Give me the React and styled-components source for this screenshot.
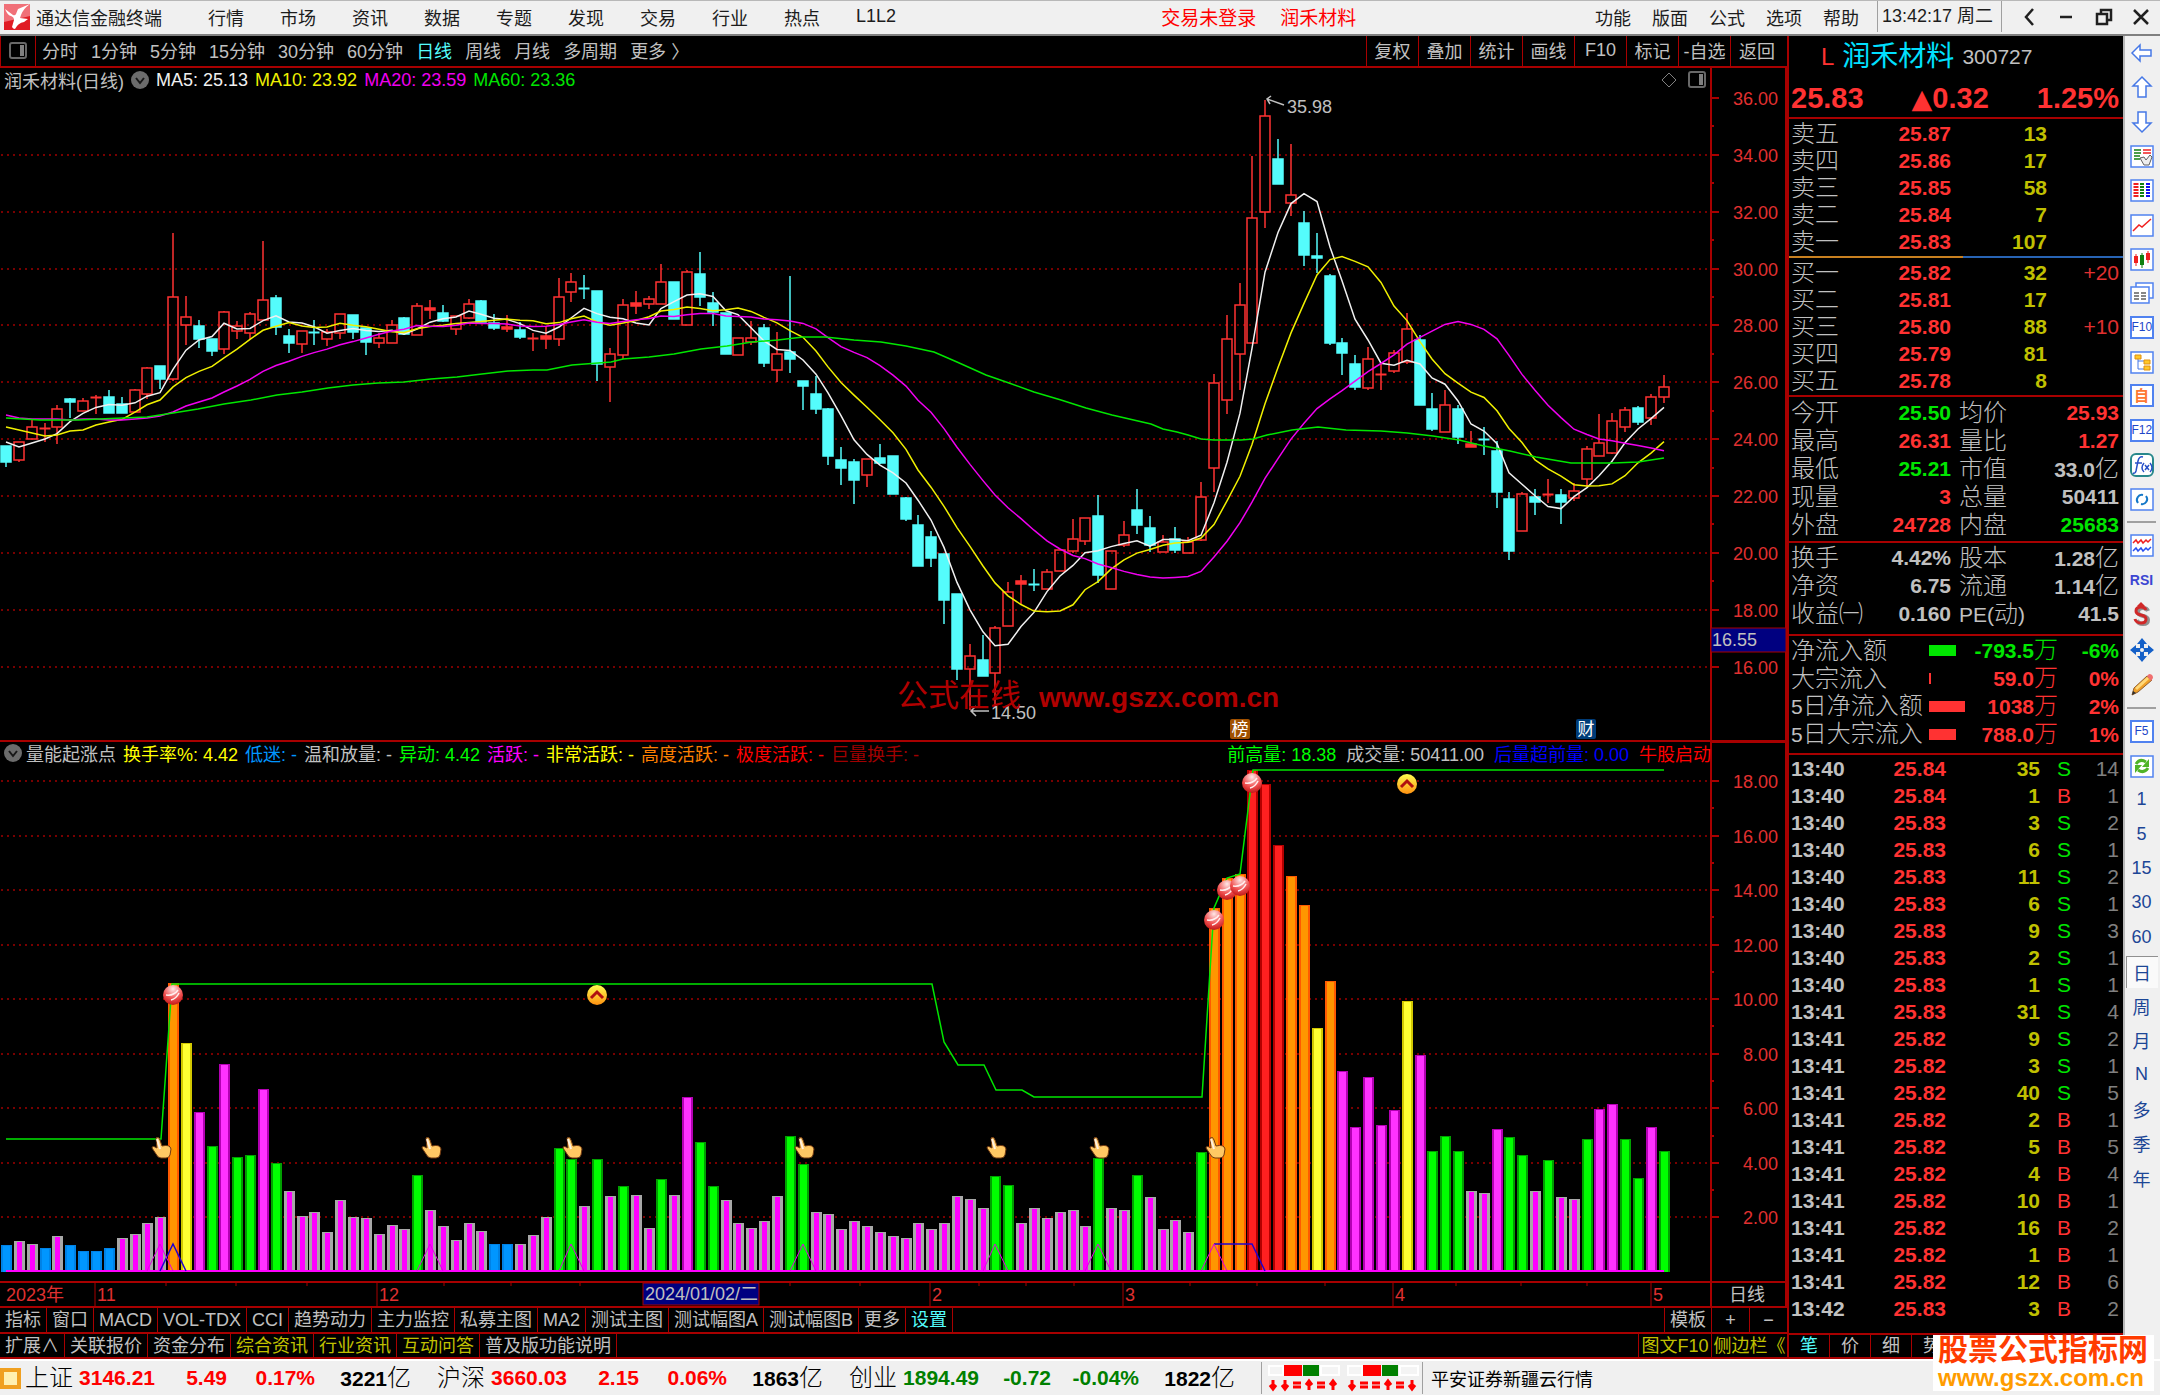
import React from 'react';
import styled, { createGlobalStyle, css } from 'styled-components';

const RED = '#ff3232';
const LINE = '#a80000';
const GREEN = '#00e600';
const YELLOW = '#c0c000';
const GREY = '#c0c0c0';
const CYAN = '#54fcfc';

const GlobalStyle = createGlobalStyle`
  * {
    box-sizing: border-box;
  }
  body {
    margin: 0;
    background: #1c2c3c;
    font-family: 'Liberation Sans', 'Noto Sans CJK SC', sans-serif;
    font-size: 18px;
    font-weight: 400;
  }
  button {
    margin: 0;
    padding: 0;
    border: 0;
    background: none;
    color: inherit;
    font: inherit;
    white-space: nowrap;
  }
  svg {
    display: block;
  }
`;

/* ---------- data ---------- */

// kind, high, body top, body bottom, low
// u: rising (hollow), d: falling, f: rising with a flat body
const CANDLES = [
  ['d', 446, 446, 462, 467], ['u', 442, 442, 460, 462], ['u', 420, 427, 439, 439], ['f', 423, 428, 429, 442],
  ['u', 405, 409, 427, 444], ['d', 398, 399, 402, 418], ['u', 398, 401, 411, 411], ['f', 395, 397, 398, 414],
  ['d', 390, 397, 413, 413], ['d', 397, 404, 413, 413], ['u', 389, 390, 412, 412], ['u', 367, 368, 394, 399],
  ['d', 366, 366, 379, 389], ['u', 233, 297, 379, 381], ['u', 296, 317, 325, 345], ['d', 320, 326, 339, 348],
  ['d', 339, 339, 351, 356], ['u', 311, 312, 349, 354], ['u', 321, 326, 331, 339], ['u', 312, 314, 333, 339],
  ['u', 241, 300, 320, 320], ['d', 295, 298, 327, 335], ['d', 329, 336, 343, 353], ['u', 331, 331, 344, 353],
  ['d', 320, 332, 333, 345], ['u', 329, 332, 339, 346], ['u', 314, 314, 333, 339], ['d', 315, 315, 332, 339],
  ['d', 328, 328, 342, 355], ['u', 333, 338, 343, 348], ['u', 320, 325, 343, 343], ['d', 317, 318, 334, 335],
  ['u', 303, 306, 335, 335], ['f', 300, 308, 310, 319], ['d', 305, 313, 321, 322], ['u', 316, 316, 329, 335],
  ['u', 299, 304, 318, 319], ['d', 300, 301, 322, 322], ['d', 314, 323, 328, 330], ['f', 315, 327, 329, 332],
  ['d', 322, 330, 337, 339], ['f', 333, 338, 339, 351], ['f', 326, 336, 339, 349], ['u', 278, 297, 339, 346],
  ['u', 273, 282, 292, 302], ['d', 275, 288, 289, 299], ['d', 291, 291, 364, 381], ['u', 348, 354, 367, 402],
  ['u', 299, 305, 355, 359], ['f', 291, 303, 306, 314], ['u', 296, 299, 304, 309], ['u', 264, 282, 304, 304],
  ['d', 282, 282, 319, 319], ['u', 270, 272, 325, 325], ['d', 252, 274, 297, 306], ['d', 292, 303, 312, 326],
  ['d', 313, 313, 354, 354], ['u', 338, 338, 355, 355], ['u', 321, 338, 342, 345], ['d', 324, 328, 363, 367],
  ['u', 332, 354, 370, 382], ['d', 276, 352, 359, 373], ['d', 381, 381, 386, 410], ['d', 376, 394, 409, 414],
  ['d', 408, 409, 456, 465], ['d', 447, 460, 468, 485], ['d', 459, 462, 480, 504], ['u', 459, 459, 475, 487],
  ['d', 444, 458, 463, 464], ['d', 456, 456, 494, 494], ['d', 497, 498, 519, 521], ['d', 515, 525, 566, 566],
  ['d', 531, 537, 558, 567], ['d', 554, 554, 600, 624], ['d', 594, 594, 669, 680], ['u', 644, 656, 669, 710],
  ['d', 635, 660, 676, 676], ['u', 626, 628, 673, 707], ['u', 582, 592, 626, 626], ['f', 575, 581, 584, 605],
  ['d', 569, 584, 585, 591], ['u', 569, 572, 589, 589], ['u', 550, 550, 571, 571], ['u', 519, 539, 551, 553],
  ['u', 518, 518, 541, 545], ['d', 495, 516, 575, 583], ['u', 551, 551, 589, 589], ['u', 521, 535, 545, 547],
  ['d', 489, 510, 525, 534], ['d', 516, 528, 545, 552], ['u', 535, 542, 552, 552], ['d', 527, 539, 550, 553],
  ['u', 537, 542, 553, 553], ['u', 482, 497, 540, 541], ['u', 374, 383, 468, 492], ['u', 315, 339, 400, 414],
  ['u', 283, 305, 354, 390], ['u', 156, 218, 343, 343], ['u', 100, 116, 212, 228], ['d', 139, 159, 184, 184],
  ['u', 144, 195, 203, 216], ['d', 211, 223, 255, 266], ['d', 233, 256, 258, 273], ['d', 274, 276, 343, 345],
  ['d', 338, 343, 353, 375], ['d', 355, 364, 387, 390], ['u', 347, 359, 388, 390], ['f', 362, 374, 375, 390],
  ['u', 350, 353, 371, 373], ['u', 313, 329, 362, 364], ['d', 335, 340, 405, 405], ['d', 393, 409, 429, 431],
  ['u', 390, 405, 432, 432], ['d', 405, 409, 437, 444], ['f', 431, 444, 447, 447], ['d', 427, 439, 440, 455],
  ['d', 441, 451, 492, 508], ['d', 492, 499, 551, 560], ['u', 492, 494, 531, 531], ['d', 489, 497, 502, 515],
  ['f', 479, 494, 495, 503], ['d', 489, 495, 502, 524], ['u', 483, 491, 498, 501], ['u', 446, 449, 479, 487],
  ['u', 414, 443, 456, 456], ['u', 413, 421, 453, 454], ['u', 407, 410, 427, 432], ['d', 406, 408, 422, 425],
  ['u', 394, 397, 418, 425], ['u', 375, 387, 397, 403],
];

const SEED5 = [442, 447, 443, 439];
const SEED10 = [427, 430, 433, 436, 435, 431, 430, 425, 422];
const SEED20 = [415, 418, 419, 419, 419, 420, 419, 419, 420, 420, 419, 418, 416, 412, 406, 402, 398, 392, 386];
const MA60 =
  '6,418 40,420 79,420 99,419 123,418 147,417 173,413 198,409 224,404 251,400 277,395 302,392 328,388 353,385 ' +
  '378,383 404,382 431,379 457,377 482,374 508,371 533,370 547,370 572,365 611,362 623,359 649,357 674,354 ' +
  '701,349 727,346 752,342 778,340 803,337 825,337 854,340 881,342 906,346 934,352 957,362 986,375 1009,383 ' +
  '1034,392 1061,400 1086,408 1112,415 1138,421 1151,424 1163,429 1177,432 1188,435 1201,439 1214,440 1241,440 ' +
  '1253,439 1267,435 1292,430 1318,427 1346,430 1381,431 1407,433 1433,436 1459,440 1484,446 1510,451 ' +
  '1536,457 1571,463 1613,463 1638,462 1664,458';

// colour key and top of each turnover bar
const BARS = (
  'b1245 w1241 w1244 b1248 w1236 b1245 b1251 b1251 b1248 w1238 w1234 w1223 w1217 o983 y1043 m1112 g1146 m1064 ' +
  'g1157 g1155 m1089 g1163 w1191 w1216 w1212 w1232 w1200 w1217 w1218 w1234 w1225 w1229 g1175 w1210 w1226 w1240 ' +
  'w1223 w1231 b1244 b1244 w1244 w1235 w1217 g1148 g1159 w1206 g1159 w1196 g1186 w1195 w1228 g1179 w1195 m1097 ' +
  'g1142 g1186 w1200 w1223 w1228 w1221 w1196 g1136 g1164 w1212 w1214 w1229 w1221 w1226 w1232 w1236 w1238 w1223 ' +
  'w1229 w1223 w1196 w1199 w1208 g1176 g1185 w1223 w1208 w1218 w1212 w1210 w1226 g1158 w1208 w1210 g1175 w1197 ' +
  'w1229 w1220 w1232 g1152 o908 o878 o874 r770 r784 r845 o876 o905 y1028 o981 m1071 m1127 m1077 m1125 m1110 ' +
  'y1001 m1055 g1151 g1136 g1151 w1191 w1193 m1129 g1137 g1155 w1191 g1160 w1197 w1199 g1139 m1109 m1104 g1139 ' +
  'g1178 m1127 g1151'
).split(' ');

const BAR_COLORS = {
  b: ['#0082e6', '#0096ff'],
  w: ['#a8a8a8', '#ff00ff'],
  m: ['#b400b4', '#ff32ff'],
  g: ['#00a000', '#00ff00'],
  y: ['#d2c800', '#ffff32'],
  o: ['#ff5a00', '#ff9600'],
  r: ['#b40000', '#ff2020'],
};

const px = (i) => Math.round(6 + i * 12.85);
const close = ([kind, , top, bottom]) => (kind === 'd' ? bottom : top);

const average = (seed) => {
  const n = seed.length + 1;
  return CANDLES.map((_, i) => {
    const y =
      i < seed.length
        ? seed[i]
        : CANDLES.slice(i - n + 1, i + 1).reduce((sum, c) => sum + close(c), 0) / n;
    return `${px(i)},${y.toFixed(1)}`;
  }).join(' ');
};

const MENU = ['行情', '市场', '资讯', '数据', '专题', '发现', '交易', '行业', '热点', 'L1L2'];
const MENU_RIGHT = ['功能', '版面', '公式', '选项', '帮助'];
const PERIODS = ['分时', '1分钟', '5分钟', '15分钟', '30分钟', '60分钟', '日线', '周线', '月线', '多周期', '更多 〉'];
const TOOLS = ['复权', '叠加', '统计', '画线', 'F10', '标记', '-自选', '返回'];

const INDICATORS = [
  '指标', '窗口', 'MACD', 'VOL-TDX', 'CCI', '趋势动力', '主力监控', '私募主图', 'MA2',
  '测试主图', '测试幅图A', '测试幅图B', '更多', '设置',
];
const LINKS = [
  ['扩展∧'], ['关联报价'], ['资金分布'], ['综合资讯', YELLOW], ['行业资讯', YELLOW], ['互动问答', YELLOW], ['普及版功能说明'],
];

const LEGEND = [
  ['换手率%: 4.42', '#ffff00'], ['低迷: -', '#0096ff'], ['温和放量: -', GREY], ['异动: 4.42', '#00ff00'],
  ['活跃: -', '#ff00ff'], ['非常活跃: -', '#ffff00'], ['高度活跃: -', '#ff8000'], ['极度活跃: -', '#ff0000'],
  ['巨量换手: -', '#a00000'],
];
const LEGEND_RIGHT = [
  ['前高量: 18.38', '#00ff00'], ['成交量: 50411.00', GREY], ['后量超前量: 0.00', '#0000ff'], ['牛股启动', '#ff0000'],
];

const ASKS = [['卖五', '25.87', 13], ['卖四', '25.86', 17], ['卖三', '25.85', 58], ['卖二', '25.84', 7], ['卖一', '25.83', 107]];
const BIDS = [['买一', '25.82', 32, '+20'], ['买二', '25.81', 17], ['买三', '25.80', 88, '+10'], ['买四', '25.79', 81], ['买五', '25.78', 8]];

const STATS = [
  ['今开', '25.50', GREEN, '均价', '25.93', RED],
  ['最高', '26.31', RED, '量比', '1.27', RED],
  ['最低', '25.21', GREEN, '市值', '33.0亿', GREY],
  ['现量', '3', RED, '总量', '50411', GREY],
  ['外盘', '24728', RED, '内盘', '25683', GREEN],
];
const BASICS = [
  ['换手', '4.42%', GREY, '股本', '1.28亿', GREY],
  ['净资', '6.75', GREY, '流通', '1.14亿', GREY],
  ['收益㈠', '0.160', GREY, 'PE(动)', '41.5', GREY],
];
const FLOWS = [
  ['净流入额', 27, '-793.5万', '-6%', GREEN],
  ['大宗流入', 2, '59.0万', '0%', RED],
  ['5日净流入额', 36, '1038万', '2%', RED],
  ['5日大宗流入', 27, '788.0万', '1%', RED],
];

const TICKS = [
  ['13:40', '25.84', 35, 'S', 14], ['13:40', '25.84', 1, 'B', 1], ['13:40', '25.83', 3, 'S', 2],
  ['13:40', '25.83', 6, 'S', 1], ['13:40', '25.83', 11, 'S', 2], ['13:40', '25.83', 6, 'S', 1],
  ['13:40', '25.83', 9, 'S', 3], ['13:40', '25.83', 2, 'S', 1], ['13:40', '25.83', 1, 'S', 1],
  ['13:41', '25.83', 31, 'S', 4], ['13:41', '25.82', 9, 'S', 2], ['13:41', '25.82', 3, 'S', 1],
  ['13:41', '25.82', 40, 'S', 5], ['13:41', '25.82', 2, 'B', 1], ['13:41', '25.82', 5, 'B', 5],
  ['13:41', '25.82', 4, 'B', 4], ['13:41', '25.82', 10, 'B', 1], ['13:41', '25.82', 16, 'B', 2],
  ['13:41', '25.82', 1, 'B', 1], ['13:41', '25.82', 12, 'B', 6], ['13:42', '25.83', 3, 'B', 2],
];

const INDEXES = [
  ['上证', '3146.21', '5.49', '0.17%', '3221', '#ff0000'],
  ['沪深', '3660.03', '2.15', '0.06%', '1863', '#ff0000'],
  ['创业', '1894.49', '-0.72', '-0.04%', '1822', '#008000'],
];

/* ---------- title bar ---------- */

const TitleBar = styled.header`
  display: flex;
  align-items: center;
  height: 36px;
  padding: 0 0 2px 4px;
  border-top: 1px solid #b8b8b8;
  border-bottom: 2px solid #808080;
  background: #f0f0f0;
  color: #1c1c1c;
`;

const AppName = styled.span`
  margin: 0 46px 0 6px;
  white-space: nowrap;
`;

const Menu = styled.nav`
  display: flex;
  gap: ${({ $gap }) => $gap}px;
`;

const Spacer = styled.div`
  flex: ${({ $grow }) => $grow} 1 0;
`;

const Notice = styled.div`
  display: flex;
  gap: 24px;
  color: #ff0000;
  font-size: 19px;
`;

const Clock = styled.time`
  width: 125px;
  margin-left: 18px;
  padding-left: 4px;
  border: solid #a0a0a0;
  border-width: 0 1px;
  line-height: 31px;
  white-space: nowrap;
`;

const WindowButtons = styled.div`
  display: flex;
  justify-content: space-between;
  width: 158px;
  padding: 0 10px 0 18px;
`;

const Logo = () => (
  <svg width="26" height="26" viewBox="0 0 26 26">
    <rect width="26" height="26" fill="#e01c24" />
    <path d="M0 0h26v12L0 18z" fill="#f07078" />
    <path d="M1 5l8 6q2 1 3-1l2-5 12-5q-7 5-9 11l-1 3 8 1-4 3q-6 1-9 7-2 0-3-2l2-7q0-3-3-4-3 0-6-7z" fill="#fff" />
  </svg>
);

const WindowIcon = ({ d }) => (
  <svg width="18" height="18" viewBox="0 0 18 18" fill="none" stroke="#202020" strokeWidth="2.5">
    <path d={d} />
  </svg>
);

/* ---------- frame ---------- */

const Main = styled.main`
  display: flex;
  align-items: stretch;
  background: #000;
  color: ${GREY};
`;

const ChartArea = styled.section`
  flex: 1;
  min-width: 0;
`;

const ToolRow = styled.div`
  display: flex;
  height: 32px;
  border-bottom: 2px solid ${LINE};
`;

const LayoutButton = styled.button`
  display: grid;
  place-items: center;
  width: 36px;
  border: solid ${LINE};
  border-width: 0 1px;
`;

const Periods = styled.div`
  display: flex;
  flex: 1;
  gap: 13px;
  padding: 0 0 2px 6px;
`;

const PeriodButton = styled.button`
  color: ${({ $active }) => ($active ? CYAN : GREY)};
`;

const ToolButton = styled.button`
  width: 52px;
  padding-bottom: 2px;
  border-left: 1px solid ${LINE};

  &:last-child {
    width: 57px;
    padding-right: 4px;
  }
`;

const PanelIcon = () => (
  <svg width="18" height="18" viewBox="0 0 18 18">
    <rect x="1" y="1" width="16" height="15" rx="2" fill="none" stroke="#686868" strokeWidth="2" />
    <rect x="11" y="3" width="4" height="11" fill="#808080" />
  </svg>
);

/* ---------- charts ---------- */

const ChartBox = styled.div`
  display: grid;
  overflow: hidden;

  > * {
    grid-area: 1 / 1;
    min-width: 0;
  }
  > svg {
    width: 100%;
    height: auto;
  }
`;

const Legend = styled.div`
  z-index: 1;
  display: flex;
  align-self: start;
  align-items: center;
  gap: 7px;
  height: ${({ $height }) => $height}px;
  margin-right: 76px;
  padding-left: 4px;
  overflow: hidden;
  white-space: nowrap;
`;

const LegendItem = styled.span`
  color: ${({ $color }) => $color || GREY};
`;

const LegendTitle = styled.span`
  display: flex;
  align-items: center;
  gap: 4px;
`;

const LegendEnd = styled.div`
  display: flex;
  align-items: center;
  gap: 10px;
  margin-left: auto;
  padding-right: ${({ $pad }) => $pad || 0}px;
`;

const DropIcon = () => (
  <svg width="18" height="18" viewBox="0 0 18 18">
    <circle cx="9" cy="9" r="9" fill="#6c6c6c" />
    <path d="M5 7l4 5 4-5" fill="none" stroke="#181818" strokeWidth="2" />
  </svg>
);

const Dots = ({ y }) => <line x1="1" x2="1711" y1={y} y2={y} stroke="#a00000" strokeWidth="1.5" strokeDasharray="2 4" />;

const AxisLabel = ({ y, children }) => (
  <text x="1778" y={y + 7} textAnchor="end" fontSize="18" fill="#e03030">
    {children}
  </text>
);

const Tick = ({ y, long }) => <line x1="1711" x2={long ? 1719 : 1714} y1={y} y2={y} stroke={LINE} strokeWidth="2" />;

const Candle = ({ i, data: [kind, high, top, bottom, low] }) => {
  const x = px(i);
  const color = kind === 'd' ? CYAN : RED;
  return (
    <g stroke={color} strokeWidth="1.5">
      {high < top && <line x1={x} x2={x} y1={high} y2={top} />}
      {low > bottom && <line x1={x} x2={x} y1={bottom} y2={low} />}
      <rect
        x={x - 5}
        y={top}
        width="10"
        height={bottom - top}
        fill={kind === 'u' ? 'none' : color}
        strokeWidth={bottom - top < 2 ? 1 : 1.5}
      />
    </g>
  );
};

const Badge = ({ x, fill, children }) => (
  <g>
    <rect x={x} y="719" width="20" height="20" rx="2" fill={fill} />
    <text x={x + 10} y="735" textAnchor="middle" fontSize="17" fill="#fff">
      {children}
    </text>
  </g>
);

const priceY = (p) => Math.round(98 + (36 - p) * 28.43);
const volumeY = (v) => Math.round(1272 - v * 27.28);

const PriceChart = () => (
  <svg viewBox="0 68 1787 674">
    {[34, 32, 30, 28, 26, 24, 22, 20, 18, 16].map((p) => (
      <Dots key={p} y={priceY(p)} />
    ))}
    {CANDLES.map((c, i) => (
      <Candle key={i} i={i} data={c} />
    ))}
    <g fill="none" strokeWidth="1.5">
      <polyline points={average(SEED5)} stroke="#f0f0f0" />
      <polyline points={average(SEED10)} stroke="#f0f000" />
      <polyline points={average(SEED20)} stroke="#f000f0" />
      <polyline points={MA60} stroke="#00e600" />
    </g>
    <g stroke={GREY} strokeWidth="1.5" fill="none">
      <path d="M1284 105l-17-6m4-3l-4 3 3 5" />
      <path d="M989 711h-18m5-5l-5 5 5 5" />
    </g>
    <text x="1287" y="113" fontSize="18" fill={GREY}>35.98</text>
    <text x="991" y="719" fontSize="18" fill={GREY}>14.50</text>
    <text x="897" y="706" fontSize="31" fill="#b00000">公式在线</text>
    <text x="1039" y="707" fontSize="28" fontWeight="700" fill="#b00000">www.gszx.com.cn</text>
    <Badge x={1230} fill="#a05000">榜</Badge>
    <Badge x={1576} fill="#003c78">财</Badge>
    <path d="M1711 68v672M0 741h1787M1786 68v672" stroke={LINE} strokeWidth="2" />
    {Array.from({ length: 21 }, (_, k) => 36 - k).map((p) => (
      <Tick key={p} y={priceY(p)} long={p % 2 === 0} />
    ))}
    {[36, 34, 32, 30, 28, 26, 24, 22, 20, 18, 16].map((p) => (
      <AxisLabel key={p} y={priceY(p)}>{`${p}.00`}</AxisLabel>
    ))}
    <rect x="1711" y="628" width="75" height="24" fill="#000080" stroke={LINE} />
    <text x="1712" y="646" fontSize="18" fill={GREY}>16.55</text>
  </svg>
);

const Ball = ({ i, y }) => (
  <g>
    <circle cx={px(i)} cy={y} r="10" fill="url(#ball)" />
    <path d={`M${px(i) - 7} ${y}q8 1 12-5M${px(i) - 2} ${y + 5}q5-1 8-7`} stroke="#fff0f0" strokeWidth="1.5" fill="none" />
  </g>
);

const UpMark = ({ i, y }) => (
  <g>
    <circle cx={px(i)} cy={y} r="10" fill="url(#gold)" />
    <path d={`M${px(i) - 6} ${y + 3}l6-6 6 6`} stroke="#b01010" strokeWidth="3" fill="none" />
  </g>
);

const Hand = ({ i }) => (
  <g transform={`translate(${px(i) - 8} 1137)`}>
    <path
      d="M4 1q3-2 4 2l2 6q8-2 9 3l-1 6q-1 3-4 3h-5q-3 0-5-4l-4-6q0-3 5 0z"
      fill="#ffc864"
      stroke="#703810"
    />
    <path d="M5 2l3 10" stroke="#fff0e0" strokeWidth="2" />
  </g>
);

const Bar = ({ i, data }) => {
  const [edge, core] = BAR_COLORS[data[0]];
  const top = Number(data.slice(1));
  const inset = data[0] === 'w' ? 3 : 2;
  return (
    <g>
      <rect x={px(i) - 5} y={top} width="11" height={1272 - top} fill={edge} />
      <rect x={px(i) - 5 + inset} y={top + 1} width={11 - inset * 2} height={1271 - top} fill={core} />
    </g>
  );
};

const spike = (i) => `M${px(i - 1)} 1271L${px(i)} 1244L${px(i + 1)} 1271`;

const MONTHS = [[95, '11'], [377, '12'], [930, '2'], [1123, '3'], [1393, '4'], [1651, '5']];
const WEEKS = [166, 236, 307, 444, 511, 580, 790, 860, 979, 1026, 1074, 1190, 1257, 1325, 1456, 1521, 1587];

const TurnoverChart = () => (
  <svg viewBox="0 742 1787 564">
    <defs>
      <radialGradient id="ball" cx="0.5" cy="0.2" r="0.8">
        <stop offset="0" stopColor="#ffe8e8" />
        <stop offset="0.6" stopColor="#f05050" />
        <stop offset="1" stopColor="#c01818" />
      </radialGradient>
      <linearGradient id="gold" x2="0" y2="1">
        <stop offset="0" stopColor="#ffff50" />
        <stop offset="1" stopColor="#ff9010" />
      </linearGradient>
    </defs>
    {[18, 16, 14, 12, 10, 8, 6, 4, 2].map((v) => (
      <Dots key={v} y={volumeY(v)} />
    ))}
    {BARS.map((b, i) => (
      <Bar key={i} i={i} data={b} />
    ))}
    <path d="M6 1271H1664" stroke="#ff00ff" strokeWidth="2" />
    <path d={spike(13) + `M${px(94)} 1244H${px(97)}L${px(98)} 1271`} stroke="#2000d0" strokeWidth="1.5" fill="none" />
    <path d={[12, 33, 44, 62, 77, 85, 94].map(spike).join('')} stroke="#e000e0" strokeWidth="1" fill="none" />
    <polyline
      points="6,1139 161,1139 172,984 932,984 944,1042 958,1065 984,1065 996,1090 1022,1090 1034,1097 1202,1097 1214,908 1227,878 1240,874 1253,770 1664,770"
      fill="none"
      stroke="#00e600"
      strokeWidth="1.5"
    />
    <Ball i={13} y={995} />
    <Ball i={94} y={920} />
    <Ball i={95} y={890} />
    <Ball i={96} y={886} />
    <Ball i={97} y={783} />
    <UpMark i={46} y={995} />
    <UpMark i={109} y={784} />
    {[12, 33, 44, 62, 77, 85, 94].map((i) => (
      <Hand key={i} i={i} />
    ))}
    <path d="M1711 742h75v540h-75zM0 1282h1787M1711 1282v24M1786 1282v24" fill="none" stroke={LINE} strokeWidth="2" />
    {Array.from({ length: 17 }, (_, k) => k + 2).map((v) => (
      <Tick key={v} y={volumeY(v)} long={v % 2 === 0} />
    ))}
    {[18, 16, 14, 12, 10, 8, 6, 4, 2].map((v) => (
      <AxisLabel key={v} y={volumeY(v)}>{`${v}.00`}</AxisLabel>
    ))}
    <text x="6" y="1301" fontSize="18" fill="#e03030">2023年</text>
    {MONTHS.map(([x, label]) => (
      <g key={x}>
        <line x1={x} x2={x} y1="1283" y2="1306" stroke={LINE} />
        <text x={x + 2} y="1301" fontSize="18" fill="#e03030">{label}</text>
      </g>
    ))}
    {WEEKS.map((x) => (
      <line key={x} x1={x} x2={x} y1="1283" y2="1286" stroke={LINE} />
    ))}
    <rect x="643" y="1283" width="116" height="22" fill="#000080" stroke={LINE} />
    <text x="645" y="1300" fontSize="18" fill={GREY}>2024/01/02/二</text>
    <text x="1729" y="1301" fontSize="18" fill={GREY}>日线</text>
  </svg>
);

/* ---------- tab rows ---------- */

const TabRow = styled.div`
  display: flex;
  height: ${({ $height }) => $height}px;
  border-top: 2px solid ${LINE};
  ${({ $last }) => $last && css`border-bottom: 2px solid ${LINE};`}
`;

const Tab = styled.button`
  padding: 0 5px;
  border-right: 1px solid ${LINE};
  color: ${({ $color }) => $color || GREY};
  line-height: 22px;
`;

const EndTab = styled(Tab)`
  width: ${({ $width }) => $width}px;
  padding: 0;
  border-right: 0;
  border-left: 1px solid ${LINE};
`;

/* ---------- quote panel ---------- */

const Panel = styled.aside`
  display: flex;
  flex-direction: column;
  flex: none;
  width: 336px;
  border-left: 2px solid ${LINE};
  font-size: 21px;
`;

const PanelBlock = styled.div`
  padding: ${({ $pad }) => $pad};
  border-bottom: 2px solid ${LINE};
`;

const PanelRows = styled.div`
  padding: 1px 4px 1px 2px;
`;

const StockName = styled.h1`
  display: flex;
  align-items: center;
  gap: 8px;
  height: 42px;
  margin: 0;
  padding: 0 0 2px 30px;
  color: ${GREY};
  font-size: 21px;
  font-weight: 400;
`;

const NameText = styled.span`
  color: #00e0ff;
  font-size: 28px;
  line-height: 36px;
`;

const Flag = styled.span`
  color: ${RED};
  font-size: 24px;
`;

const PriceLine = styled.div`
  display: flex;
  justify-content: space-between;
  color: ${RED};
  font-size: 29px;
  font-weight: 700;
  line-height: 38px;
`;

const RiseMark = styled.span`
  font-family: 'DejaVu Sans', sans-serif;
  font-size: 27px;
  line-height: 30px;
`;

const Cell = styled.span`
  color: ${({ $color }) => $color || GREY};
  font-weight: ${({ $plain }) => ($plain ? 400 : 700)};
  text-align: right;
  white-space: nowrap;
`;

const Label = styled.span`
  font-size: 24px;
  font-weight: 300;
  white-space: nowrap;

  b {
    font-size: 21px;
  }
`;

const Unit = styled.span`
  font-size: 24px;
  font-weight: 300;
`;

const OrderRow = styled.div`
  display: grid;
  grid-template-columns: 60px 100px 96px 1fr;
  height: 27px;
  line-height: 27px;
`;

const Divider = styled.div`
  height: 2px;
  background: linear-gradient(90deg, #c88020 52%, #2864b4 52%);
`;

const StatRow = styled.div`
  display: grid;
  grid-template-columns: 80px 80px 80px 1fr;
  height: 28px;
  line-height: 28px;

  > :nth-child(3) {
    padding-left: 8px;
  }
`;

const FlowRow = styled.div`
  display: grid;
  grid-template-columns: 138px 40px 89px 1fr;
  align-items: center;
  height: 28px;
  line-height: 28px;
`;

const FlowBar = styled.div`
  height: 11px;
  background: ${({ $color }) => $color};
`;

const TickTable = styled.table`
  width: 100%;
  border-collapse: collapse;
  table-layout: fixed;
  font-weight: 700;
  line-height: 27px;

  td {
    height: 27px;
    padding: 0;
    text-align: right;
  }
  td:first-child {
    width: 60px;
    padding-left: 2px;
    text-align: left;
  }
  td:nth-child(2) {
    width: 97px;
    color: ${RED};
  }
  td:nth-child(3) {
    width: 94px;
    color: ${YELLOW};
  }
  td:nth-child(4) {
    width: 31px;
    font-weight: 400;
  }
  td:nth-child(5) {
    padding-right: 4px;
    color: #808080;
    font-weight: 400;
  }
`;

const Side = styled.td`
  color: ${({ $side }) => ($side === 'S' ? GREEN : RED)};
`;

const PanelTabs = styled.div`
  display: flex;
  height: 26px;
  margin-top: auto;
  border-top: 2px solid ${LINE};
  border-bottom: 2px solid ${LINE};
  font-size: 18px;
`;

const PanelTab = styled(Tab)`
  width: 41px;
`;

// numbers are bold, the Chinese unit after them is light
const Amount = ({ children }) => {
  const unit = /[亿万]$/.test(children) ? children.slice(-1) : '';
  return (
    <>
      {unit ? children.slice(0, -1) : children}
      {unit && <Unit>{unit}</Unit>}
    </>
  );
};

// latin parts of a label use the smaller bold face
const LabelText = ({ children }) => (
  <Label>
    {children.split(/([A-Z0-9()]+)/).map((part, i) => (i % 2 ? <b key={i}>{part}</b> : part))}
  </Label>
);

const Orders = ({ rows }) =>
  rows.map(([label, price, count, change]) => (
    <OrderRow key={label}>
      <Label>{label}</Label>
      <Cell $color={RED}>{price}</Cell>
      <Cell $color={YELLOW}>{count}</Cell>
      {change && <Cell $plain $color="#e03030">{change}</Cell>}
    </OrderRow>
  ));

const Stats = ({ rows }) =>
  rows.map(([l1, v1, c1, l2, v2, c2]) => (
    <StatRow key={l1}>
      <LabelText>{l1}</LabelText>
      <Cell $color={c1}>{v1}</Cell>
      <LabelText>{l2}</LabelText>
      <Cell $color={c2}><Amount>{v2}</Amount></Cell>
    </StatRow>
  ));

const QuotePanel = () => (
  <Panel>
    <PanelBlock $pad="1px 4px 0 2px">
      <StockName>
        <Flag>L</Flag>
        <NameText>润禾材料</NameText>
        300727
      </StockName>
      <PriceLine>
        <span>25.83</span>
        <span><RiseMark>▲</RiseMark>0.32</span>
        <span>1.25%</span>
      </PriceLine>
    </PanelBlock>
    <PanelBlock $pad="0">
      <PanelRows>
        <Orders rows={ASKS} />
      </PanelRows>
      <Divider />
      <PanelRows>
        <Orders rows={BIDS} />
      </PanelRows>
    </PanelBlock>
    <PanelBlock $pad="2px 4px 2px 2px">
      <Stats rows={STATS} />
    </PanelBlock>
    <PanelBlock $pad="1px 4px 6px 2px">
      <Stats rows={BASICS} />
    </PanelBlock>
    <PanelBlock $pad="0 4px 5px 2px">
      {FLOWS.map(([label, width, amount, pct, color]) => (
        <FlowRow key={label}>
          <LabelText>{label}</LabelText>
          <FlowBar $color={color} style={{ width }} />
          <Cell $color={color}><Amount>{amount}</Amount></Cell>
          <Cell $color={color}>{pct}</Cell>
        </FlowRow>
      ))}
    </PanelBlock>
    <TickTable>
      <tbody>
        {TICKS.map(([time, price, count, side, deals], i) => (
          <tr key={i}>
            <td>{time}</td>
            <td>{price}</td>
            <td>{count}</td>
            <Side $side={side}>{side}</Side>
            <td>{deals}</td>
          </tr>
        ))}
      </tbody>
    </TickTable>
    <PanelTabs>
      {['笔', '价', '细', '势'].map((t) => (
        <PanelTab key={t} type="button" $color={t === '笔' ? CYAN : GREY}>{t}</PanelTab>
      ))}
    </PanelTabs>
  </Panel>
);

/* ---------- side toolbar ---------- */

const SideBar = styled.div`
  flex: none;
  width: 37px;
  padding-right: 2px;
  border-left: 2px solid #b8b8b8;
  background: #f0f0f0;
  color: #1c4696;
`;

const SideGroup = styled.div`
  display: flex;
  flex-direction: column;
  justify-content: space-around;
  align-items: center;
  height: ${({ $height }) => $height}px;
`;

const SideButton = styled.button`
  display: grid;
  place-items: center;
  width: 32px;
  height: 32px;
  ${({ $active }) =>
    $active &&
    css`
      border: solid #909090;
      border-width: 1px 0 0 1px;
      background: #fafafa;
    `}
`;

const Rule = styled.div`
  height: 2px;
  margin: 5px 2px;
  background: #a0a0a0;
`;

const KeyBox = styled.span`
  width: 24px;
  border: 2px solid #5082f0;
  background: #fff;
  color: ${({ $color }) => $color || '#1e46c8'};
  font-size: ${({ $size }) => $size || 12}px;
  font-weight: ${({ $size }) => ($size ? 700 : 400)};
  line-height: 19px;
  text-align: center;
`;

const Rsi = styled.b`
  color: #3c46d2;
  font-size: 14px;
`;

const Frame = ({ children }) => (
  <svg width="24" height="24" viewBox="0 0 24 24" fill="none">
    <rect x="1" y="2" width="22" height="21" fill="#fff" stroke="#5082f0" strokeWidth="1.5" />
    {children}
  </svg>
);

const Arrow = ({ d }) => (
  <svg width="24" height="24" viewBox="0 0 24 24">
    <path d={d} fill="#fff" stroke="#4678e6" strokeWidth="1.5" />
  </svg>
);

const SIDE_TOP = [
  <Arrow d="M2 12l8-8v5h11v6H10v5z" />,
  <Arrow d="M12 2l9 9h-5v11H8V11H3z" />,
  <Arrow d="M12 22l9-9h-5V2H8v11H3z" />,
  <Frame>
    <path d="M4 6h7M4 9h7M4 12h6M4 15h6" stroke="#108010" strokeWidth="1.5" />
    <path d="M13 6h8M13 9h8" stroke="#f02020" strokeWidth="1.5" />
    <path d="M10 14l4 7h5l3-8-2-2-4 5-2-3z" fill="#eee" stroke="#606060" />
  </Frame>,
  <Frame>
    <path d="M6 5v15" stroke="#f02020" strokeWidth="5" strokeDasharray="2 1" />
    <path d="M12 5v15" stroke="#108010" strokeWidth="4" strokeDasharray="2 1" />
    <path d="M18 5v15" stroke="#1010f0" strokeWidth="4" strokeDasharray="2 1" />
  </Frame>,
  <Frame>
    <path d="M3 18l6-6 3 2 9-8" stroke="#f02020" strokeWidth="1.5" />
  </Frame>,
  <Frame>
    <path d="M6 7v12M18 4v12" stroke="#f02020" />
    <path d="M6 9v7M18 6v7" stroke="#f02020" strokeWidth="4" />
    <path d="M12 6v15" stroke="#108010" />
    <path d="M12 8v10" stroke="#108010" strokeWidth="4" />
  </Frame>,
  <svg width="24" height="24" viewBox="0 0 24 24" fill="#fff" stroke="#5082f0" strokeWidth="1.5">
    <rect x="6" y="2" width="17" height="15" />
    <rect x="1" y="6" width="18" height="16" />
    <path d="M4 12h5M4 15h5M4 18h5M11 12h5M11 15h5M11 18h5" stroke="#606060" />
  </svg>,
  <KeyBox>F10</KeyBox>,
  <Frame>
    <path d="M8 8v11h7M8 11h6" stroke="#4678e6" />
    <path d="M5 5h6v4H5zM14 10h6v4h-6zM14 16h6v4h-6z" fill="#ffc828" stroke="#e09010" />
  </Frame>,
  <KeyBox $color="#ff7832" $size={15}>自</KeyBox>,
  <KeyBox>F12</KeyBox>,
  <svg width="24" height="24" viewBox="0 0 24 24" fill="none">
    <rect x="1" y="1" width="22" height="22" rx="5" fill="#fff" stroke="#28888c" strokeWidth="2" />
    <path d="M13 4q-4-1-5 4L6 18q-1 3-3 2M5 10h7M14 10q-4 5 0 9M20 10q4 5 0 9M15 12l4 5M19 12l-4 5" stroke="#2850c8" strokeWidth="1.5" />
  </svg>,
  <Frame>
    <path d="M8 16a5 5 0 0 1 5-8M16 9a5 5 0 0 1-5 8" stroke="#1478c8" strokeWidth="2" />
  </Frame>,
];

const SIDE_MIDDLE = [
  <Frame>
    <path d="M3 10l3-3 2 3 3-3 2 3 3-3 2 2 3-3" stroke="#f02020" strokeWidth="1.5" />
    <path d="M3 18l3-3 2 3 3-3 2 3 3-3 2 2 3-3" stroke="#2850f0" strokeWidth="1.5" />
  </Frame>,
  <Rsi>RSI</Rsi>,
  <svg width="24" height="26" viewBox="0 0 24 26" fill="none">
    <path d="M18 9q-1-3-5-3-5 0-5 4 0 3 5 4t5 4q0 4-5 4-5 0-6-4" stroke="#909090" strokeWidth="4" />
    <path d="M16 8q-1-3-5-3-5 0-5 4 0 3 5 4t5 4q0 4-5 4-5 0-6-4" stroke="#d02828" strokeWidth="3" />
    <path d="M7 4l4-4 4 4z" fill="#d02828" />
  </svg>,
  <svg width="24" height="24" viewBox="0 0 24 24" fill="#1460c8">
    <path d="M12 0l5 6H7zM12 24l5-6H7zM0 12l6-5v10zM24 12l-6-5v10z" />
    <path d="M12 5v14M5 12h14" stroke="#1460c8" strokeWidth="4" />
    <circle cx="12" cy="12" r="2" fill="#f0f0f0" />
  </svg>,
  <svg width="24" height="24" viewBox="0 0 24 24">
    <path d="M2 22l2-7L17 3l5 4L8 19z" fill="#f0a028" stroke="#906030" />
    <path d="M5 15L17 4l2 2L7 17z" fill="#ffd878" />
    <path d="M17 3l2-2q4 0 4 4l-2 3z" fill="#f07070" />
    <path d="M2 22l1-4 3 2z" fill="#303030" />
  </svg>,
];

const SIDE_BOTTOM = [
  <KeyBox>F5</KeyBox>,
  <Frame>
    <path d="M6 10q4-6 10-2M18 14q-4 6-10 2" stroke="#50b428" strokeWidth="3" />
    <path d="M19 5v8h-7zM5 19v-8h7z" fill="#50b428" />
  </Frame>,
  '1', '5', '15', '30', '60', '日', '周', '月', 'N', '多', '季', '年',
];

const SideButtons = ({ items, height }) => (
  <SideGroup $height={height}>
    {items.map((item, i) => (
      <SideButton key={i} type="button" $active={item === '日'}>{item}</SideButton>
    ))}
  </SideGroup>
);

/* ---------- status bar ---------- */

const StatusBar = styled.footer`
  display: flex;
  align-items: center;
  height: 36px;
  border-top: 2px solid #fff;
  background: #f0f0f0;
  color: #000;
`;

const StatusIcon = styled.div`
  width: 21px;
  height: 21px;
  margin-right: 4px;
  border: 4px solid #f0a020;
  background: #fff0b0;
`;

const IndexQuote = styled.div`
  display: grid;
  grid-template-columns: 54px 76px 72px 88px 96px;
  align-items: center;
  margin-right: 26px;
  font-size: 21px;
  line-height: 30px;
`;

const Breadth = styled.div`
  display: flex;
  align-items: center;
  gap: 6px;
  height: 32px;
  padding: 0 2px 0 6px;
  border: solid #a0a0a0;
  border-width: 0 1px;
`;

const Server = styled.span`
  padding-left: 8px;
  white-space: nowrap;
`;

const SIGNS = {
  d: 'M4 0v9M1 5l3 4 3-4',
  u: 'M4 10V1M1 5l3-4 3 4',
  e: 'M0 3h8M0 7h8',
};

const BreadthIcon = ({ signs }) => (
  <svg width="73" height="30" viewBox="0 0 73 30" fill="none">
    <path d="M1 3h14v9H1zM53 3h18v9H53z" fill="#f4f4f4" stroke="#fff" strokeWidth="2" />
    <path d="M16 2h18v11H16z" fill="#ff0000" />
    <path d="M35 2h16v11H35z" fill="#008000" />
    {signs.split('').map((s, i) => (
      <path key={i} d={SIGNS[s]} transform={`translate(${i * 12 + 1} 17)`} stroke="#ff0000" strokeWidth="3" />
    ))}
  </svg>
);

const SiteMark = styled.div`
  position: absolute;
  right: 6px;
  bottom: 5px;
  z-index: 2;
  width: 221px;
  padding: 0 5px;
  background: #fff;
  color: #ff3c00;
  font-size: 30px;
  font-weight: 700;
  line-height: 30px;
  white-space: nowrap;

  a {
    display: block;
    color: #ff9c00;
    font-size: 24px;
    line-height: 26px;
    text-decoration: none;
  }
`;

const Page = styled.div`
  position: relative;
  padding-bottom: 1px;
`;

export default function App() {
  return (
    <Page>
      <GlobalStyle />
      <TitleBar>
        <Logo />
        <AppName>通达信金融终端</AppName>
        <Menu $gap={36}>
          {MENU.map((m) => (
            <button key={m} type="button">{m}</button>
          ))}
        </Menu>
        <Spacer $grow={10} />
        <Notice>
          <span>交易未登录</span>
          <span>润禾材料</span>
        </Notice>
        <Spacer $grow={9} />
        <Menu $gap={21}>
          {MENU_RIGHT.map((m) => (
            <button key={m} type="button">{m}</button>
          ))}
        </Menu>
        <Clock>13:42:17 周二</Clock>
        <WindowButtons>
          <button type="button" aria-label="后退"><WindowIcon d="M13 1L6 9l7 8" /></button>
          <button type="button" aria-label="最小化"><WindowIcon d="M3 9h12" /></button>
          <button type="button" aria-label="还原"><WindowIcon d="M2 6h10v10H2zM6 6V2h10v10h-4" /></button>
          <button type="button" aria-label="关闭"><WindowIcon d="M2 2l14 14M16 2L2 16" /></button>
        </WindowButtons>
      </TitleBar>

      <Main>
        <ChartArea>
          <ToolRow>
            <LayoutButton type="button" aria-label="布局"><PanelIcon /></LayoutButton>
            <Periods>
              {PERIODS.map((p) => (
                <PeriodButton key={p} type="button" $active={p === '日线'}>{p}</PeriodButton>
              ))}
            </Periods>
            {TOOLS.map((t) => (
              <ToolButton key={t} type="button">{t}</ToolButton>
            ))}
          </ToolRow>

          <ChartBox>
            <PriceChart />
            <Legend $height={24}>
              <LegendItem>润禾材料(日线)</LegendItem>
              <DropIcon />
              <LegendItem $color="#f0f0f0">MA5: 25.13</LegendItem>
              <LegendItem $color="#f0f000">MA10: 23.92</LegendItem>
              <LegendItem $color="#f000f0">MA20: 23.59</LegendItem>
              <LegendItem $color="#00e600">MA60: 23.36</LegendItem>
              <LegendEnd $pad={5}>
                <svg width="18" height="18" viewBox="0 0 18 18">
                  <path d="M9 2l7 7-7 7-7-7z" fill="none" stroke="#808080" />
                </svg>
                <PanelIcon />
              </LegendEnd>
            </Legend>
          </ChartBox>

          <ChartBox>
            <TurnoverChart />
            <Legend $height={22}>
              <LegendTitle>
                <DropIcon />
                <LegendItem>量能起涨点</LegendItem>
              </LegendTitle>
              {LEGEND.map(([text, color]) => (
                <LegendItem key={text} $color={color}>{text}</LegendItem>
              ))}
              <LegendEnd>
                {LEGEND_RIGHT.map(([text, color]) => (
                  <LegendItem key={text} $color={color}>{text}</LegendItem>
                ))}
              </LegendEnd>
            </Legend>
          </ChartBox>

          <TabRow $height={26}>
            {INDICATORS.map((t) => (
              <Tab key={t} type="button" $color={t === '设置' ? CYAN : GREY}>{t}</Tab>
            ))}
            <Spacer $grow={1} />
            <EndTab type="button" $width={47}>模板</EndTab>
            <EndTab type="button" $width={38}>+</EndTab>
            <EndTab type="button" $width={38}>−</EndTab>
          </TabRow>
          <TabRow $height={27} $last>
            {LINKS.map(([text, color]) => (
              <Tab key={text} type="button" $color={color}>{text}</Tab>
            ))}
            <Spacer $grow={1} />
            <EndTab type="button" $width={73} $color={YELLOW}>图文F10</EndTab>
            <EndTab type="button" $width={76} $color={YELLOW}>侧边栏《</EndTab>
          </TabRow>
        </ChartArea>

        <QuotePanel />

        <SideBar>
          <SideButtons items={SIDE_TOP} height={480} />
          <Rule />
          <SideButtons items={SIDE_MIDDLE} height={174} />
          <Rule />
          <SideButtons items={SIDE_BOTTOM} height={481} />
        </SideBar>
      </Main>

      <StatusBar>
        <StatusIcon />
        {INDEXES.map(([name, value, change, pct, volume, color]) => (
          <IndexQuote key={name}>
            <Label>{name}</Label>
            <Cell $color={color}>{value}</Cell>
            <Cell $color={color}>{change}</Cell>
            <Cell $color={color}>{pct}</Cell>
            <Cell $color="#000">{volume}<Unit>亿</Unit></Cell>
          </IndexQuote>
        ))}
        <Breadth>
          <BreadthIcon signs="ddeueu" />
          <BreadthIcon signs="deeued" />
        </Breadth>
        <Server>平安证券新疆云行情</Server>
      </StatusBar>

      <SiteMark>
        股票公式指标网
        <a href="http://www.gszx.com.cn">www.gszx.com.cn</a>
      </SiteMark>
    </Page>
  );
}
